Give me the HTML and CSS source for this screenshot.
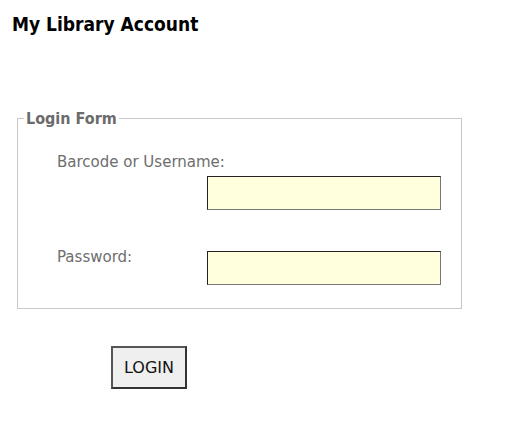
FILE: index.html
```html
<!DOCTYPE html>
<html>
<head>
<meta charset="utf-8">
<link rel="stylesheet" href="styles.css">
</head>
<body>
<h1 class="title">My Library Account</h1>
<form class="login">
  <fieldset class="box">
    <legend class="legend">Login Form</legend>
    <div class="row">
      <label class="lbl" for="user">Barcode or Username:</label>
      <input class="field" id="user" type="text">
    </div>
    <div class="row row2">
      <label class="lbl" for="pass">Password:</label>
      <input class="field" id="pass" type="password">
    </div>
  </fieldset>
  <div class="actions">
    <button class="btn" type="button">LOGIN</button>
  </div>
</form>
</body>
</html>
```
FILE: styles.css
```css
html, body {
  margin: 0;
  padding: 0;
  background: #fff;
}
body {
  font-family: "DejaVu Sans Condensed", "DejaVu Sans", sans-serif;
  padding: 12px 0 0 12px;
}
.title {
  margin: 0;
  font-size: 19px;
  line-height: 24px;
  font-weight: bold;
  color: #000;
}
.login {
  margin: 0;
}
.box {
  margin: 73px 0 0 5px;
  width: 445px;
  box-sizing: border-box;
  border: 1px solid #c8c8c8;
  padding: 24px 20px 23px 6px;
}
.legend {
  padding: 0 2px;
  font-size: 16px;
  font-weight: bold;
  color: #6b6b6b;
}
.row {
  display: flex;
  flex-wrap: wrap;
  align-items: flex-start;
  margin-left: 33px;
}
.row2 {
  margin-top: 37px;
}
.lbl {
  min-width: 150px;
  font-family: "DejaVu Sans", sans-serif;
  font-size: 15px;
  line-height: 20px;
  color: #6e6e6e;
}
.field {
  margin: 4px 0 0 auto;
  width: 234px;
  height: 34px;
  box-sizing: border-box;
  background: #ffffdd;
  border: 1px solid;
  border-color: #222 #777 #777 #222;
  padding: 0;
}
.actions {
  padding: 37px 0 0 99px;
}
.btn {
  width: 76px;
  height: 43px;
  box-sizing: border-box;
  background: #efefef;
  border: 2px solid #444;
  border-color: #555 #333 #333 #555;
  font-family: "DejaVu Sans", sans-serif;
  font-size: 16px;
  color: #111;
  padding: 0;
}
```
